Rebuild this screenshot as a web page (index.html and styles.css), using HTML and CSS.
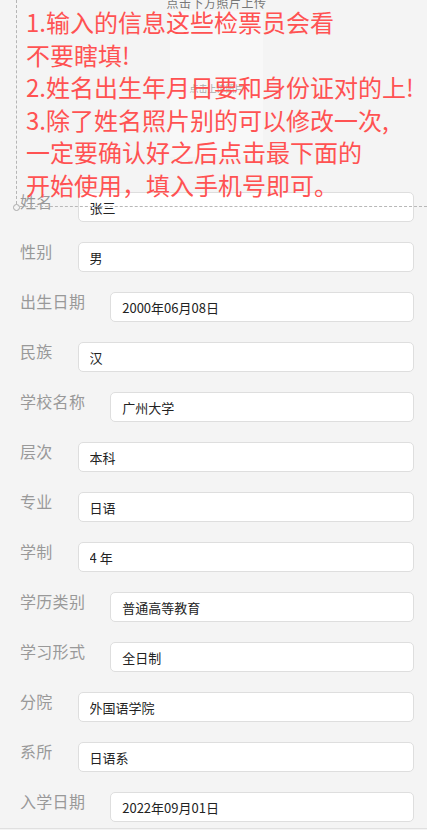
FILE: index.html
```html
<!DOCTYPE html>
<html lang="zh-CN">
<head>
<meta charset="utf-8">
<title>信息填写</title>
<link rel="stylesheet" href="styles.css">
</head>
<body>
<div class="page">
  <header class="header">
    <div class="caption">点击下方照片上传</div>
    <div class="photo"><span class="photo-hint">点击上传照片</span></div>
    <div class="notice">1.输入的信息这些检票员会看<br>不要瞎填!<br>2.姓名出生年月日要和身份证对的上!<br>3.除了姓名照片别的可以修改一次,<br>一定要确认好之后点击最下面的<br>开始使用，填入手机号即可。</div>
    <div class="guide-v"></div>
    <div class="guide-h"></div>
    <div class="guide-dot"></div>
  </header>
  <main class="form">
    <div class="row"><label class="label">姓名</label><input class="field" value="张三"></div>
    <div class="row"><label class="label">性别</label><input class="field" value="男"></div>
    <div class="row"><label class="label">出生日期</label><input class="field" value="2000年06月08日"></div>
    <div class="row"><label class="label">民族</label><input class="field" value="汉"></div>
    <div class="row"><label class="label">学校名称</label><input class="field" value="广州大学"></div>
    <div class="row"><label class="label">层次</label><input class="field" value="本科"></div>
    <div class="row"><label class="label">专业</label><input class="field" value="日语"></div>
    <div class="row"><label class="label">学制</label><input class="field" value="4 年"></div>
    <div class="row"><label class="label">学历类别</label><input class="field" value="普通高等教育"></div>
    <div class="row"><label class="label">学习形式</label><input class="field" value="全日制"></div>
    <div class="row"><label class="label">分院</label><input class="field" value="外国语学院"></div>
    <div class="row"><label class="label">系所</label><input class="field" value="日语系"></div>
    <div class="row"><label class="label">入学日期</label><input class="field" value="2022年09月01日"></div>
  </main>
  <div class="footer-line"></div>
</div>
</body>
</html>
```

FILE: styles.css
```css
html, body {
  margin: 0;
  padding: 0;
  background: #f4f4f4;
  font-family: "Noto Sans CJK SC", "Noto Sans", sans-serif;
}

.page {
  width: 427px;
  overflow: hidden;
}

.header {
  position: relative;
  height: 192px;
  display: flex;
  flex-direction: column;
  align-items: center;
}

.caption {
  margin-top: -5px;
  margin-left: 6px;
  font-size: 12px;
  line-height: 16px;
  color: #777;
  letter-spacing: 0.5px;
}

.photo {
  width: 93px;
  height: 146px;
  margin-left: 6px;
  background: #f8f8f8;
  display: flex;
  justify-content: center;
  align-items: flex-start;
}

.photo-hint {
  margin-top: 72px;
  font-size: 9px;
  line-height: 12px;
  color: #aaa;
}

.notice {
  position: absolute;
  left: 26px;
  top: 6px;
  font-size: 24px;
  line-height: 32.5px;
  color: #ff5252;
  white-space: nowrap;
}

.guide-v {
  position: absolute;
  left: 16px;
  top: 0;
  height: 204px;
  border-left: 1px dashed #b5b5b5;
}

.guide-h {
  position: absolute;
  left: 20px;
  right: 0;
  top: 206px;
  border-top: 1.5px dashed #b8b8b8;
  z-index: 2;
}

.guide-dot {
  position: absolute;
  left: 13px;
  top: 204px;
  width: 5px;
  height: 5px;
  border: 1.5px solid #aaa;
  border-radius: 50%;
  background: #f4f4f4;
  z-index: 2;
}

.form {
  display: flex;
  flex-direction: column;
  gap: 20px;
  padding: 0 13px 0 20px;
}

.row {
  display: flex;
  align-items: flex-start;
}

.label {
  font-size: 16px;
  line-height: 18px;
  color: #999;
  letter-spacing: 0.3px;
  margin-right: 25px;
  white-space: nowrap;
}

.field {
  flex: 1;
  min-width: 0;
  height: 30px;
  box-sizing: border-box;
  margin: 0;
  padding: 0 11px;
  border: 1px solid #dedede;
  border-radius: 5px;
  background: #fff;
  font-family: "Noto Sans CJK SC", "Noto Sans", sans-serif;
  font-size: 13px;
  color: #222;
  outline: none;
}

.footer-line {
  margin-top: 6px;
  border-top: 1px solid #e0e0e0;
}
```
